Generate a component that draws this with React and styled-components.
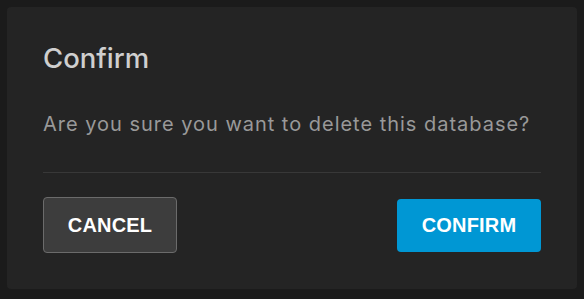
import styled, { createGlobalStyle } from "styled-components";

const GlobalStyle = createGlobalStyle`
  html, body {
    margin: 0;
    padding: 0;
    background-color: #1b1b1b;
  }
`;

const Page = styled.div`
  padding: 7px;
  height: 299px;
  box-sizing: border-box;
`;

const Card = styled.div`
  background-color: #242424;
  border-radius: 4px;
  padding: 37px 36px 36px;
  box-sizing: border-box;
  height: 282px;
  display: flex;
  flex-direction: column;
  font-family: Inter, "Open Sans", sans-serif;
`;

const Title = styled.h2`
  margin: 0;
  font-size: 27.5px;
  line-height: 28px;
  font-weight: 500;
  color: #cfcfcf;
`;

const Message = styled.p`
  margin: 40px 0 0;
  font-size: 20px;
  line-height: 24px;
  color: #999999;
  letter-spacing: 0.98px;
`;

const Divider = styled.hr`
  margin: 36px 0 0;
  border: none;
  border-top: 1px solid #383838;
`;

const Actions = styled.div`
  margin-top: 24px;
  display: flex;
  align-items: center;
  justify-content: space-between;
`;

const Button = styled.button`
  font-family: "Liberation Sans", Arial, sans-serif;
  font-weight: bold;
  font-size: 20px;
  letter-spacing: 0.2px;
  text-transform: uppercase;
  color: #ffffff;
  border-radius: 4px;
  cursor: pointer;
  box-sizing: border-box;
  height: ${(p) => (p.$primary ? "53px" : "56px")};
  width: ${(p) => (p.$primary ? "144px" : "134px")};
  padding: 0;
  background-color: ${(p) => (p.$primary ? "#0097d4" : "#3d3d3d")};
  border: ${(p) => (p.$primary ? "none" : "1px solid #6b6b6b")};
`;

export default function App() {
  return (
    <Page>
      <GlobalStyle />
      <Card>
        <Title>Confirm</Title>
        <Message>Are you sure you want to delete this database?</Message>
        <Divider />
        <Actions>
          <Button>Cancel</Button>
          <Button $primary>Confirm</Button>
        </Actions>
      </Card>
    </Page>
  );
}
